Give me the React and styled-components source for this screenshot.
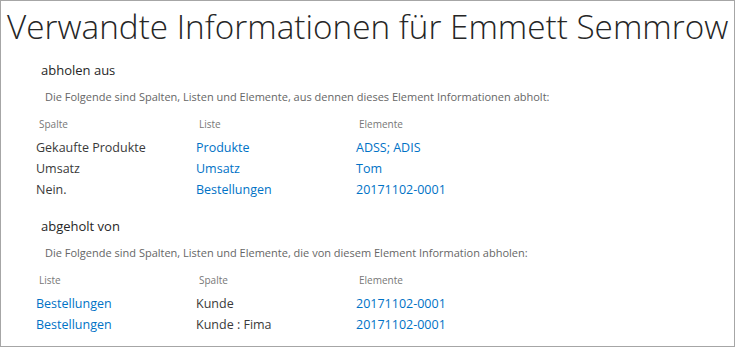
import React from "react";
import styled, { createGlobalStyle } from "styled-components";

const Global = createGlobalStyle`
  html, body { margin: 0; padding: 0; background: #fff; }
  body { font-family: "Open Sans", "Noto Sans", sans-serif; }
`;

const Frame = styled.div`
  box-sizing: border-box;
  width: 735px;
  height: 347px;
  border: 1px solid #a6a6a6;
  background: #fff;
  overflow: hidden;
`;

const Title = styled.h1`
  margin: 0;
  padding: 4px 0 0 6px;
  font-family: "Open Sans", sans-serif;
  font-weight: 300;
  font-size: 33.3px;
  line-height: 42px;
  color: #262626;
  letter-spacing: 0;
  white-space: nowrap;
`;

const Section = styled.section`
  padding: ${(p) => p.$top}px 0 0 35px;
`;

const SectionHeading = styled.div`
  padding-left: 5px;
  font-size: 13px;
  line-height: 18px;
  color: #262626;
`;

const Description = styled.div`
  padding: 10px 0 0 9px;
  font-size: 11px;
  line-height: 16px;
  color: #666;
`;

const Table = styled.div`
  display: grid;
  grid-template-columns: 160px 160px auto;
  padding-top: 12px;
`;

const HeadCell = styled.div`
  padding-left: 3px;
  font-size: 10px;
  line-height: 15px;
  color: #777;
  padding-bottom: 5px;
`;

const Cell = styled.div`
  font-size: 12.5px;
  line-height: 21px;
  color: ${(p) => (p.$link ? "#0072c6" : "#3a3a3a")};
  white-space: nowrap;
`;

const sections = [
  {
    top: 14,
    heading: "abholen aus",
    desc: "Die Folgende sind Spalten, Listen und Elemente, aus dennen dieses Element Informationen abholt:",
    cols: [
      { label: "Spalte", link: false },
      { label: "Liste", link: true },
      { label: "Elemente", link: true },
    ],
    rows: [
      ["Gekaufte Produkte", "Produkte", "ADSS; ADIS"],
      ["Umsatz", "Umsatz", "Tom"],
      ["Nein.", "Bestellungen", "20171102-0001"],
    ],
  },
  {
    top: 17,
    heading: "abgeholt von",
    desc: "Die Folgende sind Spalten, Listen und Elemente, die von diesem Element Information abholen:",
    cols: [
      { label: "Liste", link: true },
      { label: "Spalte", link: false },
      { label: "Elemente", link: true },
    ],
    rows: [
      ["Bestellungen", "Kunde", "20171102-0001"],
      ["Bestellungen", "Kunde : Fima", "20171102-0001"],
    ],
  },
];

export default function App() {
  return (
    <>
      <Global />
      <Frame>
        <Title>Verwandte Informationen für Emmett Semmrow</Title>
        {sections.map((s) => (
          <Section key={s.heading} $top={s.top}>
            <SectionHeading>{s.heading}</SectionHeading>
            <Description>{s.desc}</Description>
            <Table>
              {s.cols.map((c) => (
                <HeadCell key={c.label}>{c.label}</HeadCell>
              ))}
              {s.rows.map((r, i) =>
                r.map((v, j) => (
                  <Cell key={i + "-" + j} $link={s.cols[j].link}>
                    {v}
                  </Cell>
                ))
              )}
            </Table>
          </Section>
        ))}
      </Frame>
    </>
  );
}
